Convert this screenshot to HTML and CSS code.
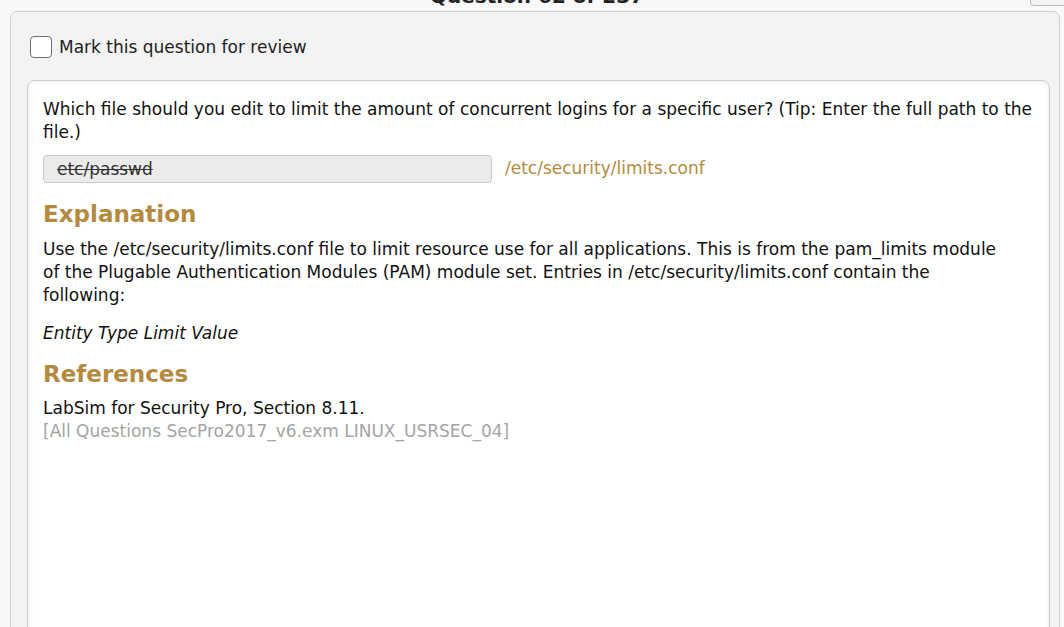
FILE: index.html
```html
<!DOCTYPE html>
<html>
<head>
<meta charset="utf-8">
<link rel="stylesheet" href="styles.css">
</head>
<body>
<div class="topbar">
  <div class="title">Question 62 of 237</div>
  <div class="topbtn"></div>
</div>
<div class="outer">
  <label class="mark"><span class="box"></span><span>Mark this question for review</span></label>
  <div class="inner">
    <p class="question">Which file should you edit to limit the amount of concurrent logins for a specific user? (Tip: Enter the full path to the file.)</p>
    <div class="answer-row">
      <div class="input"><s>etc/passwd</s></div>
      <span class="correct">/etc/security/limits.conf</span>
    </div>
    <h2>Explanation</h2>
    <p class="para">Use the /etc/security/limits.conf file to limit resource use for all applications. This is from the pam_limits module of the Plugable Authentication Modules (PAM) module set. Entries in /etc/security/limits.conf contain the following:</p>
    <p class="para italic">Entity Type Limit Value</p>
    <h2 class="refs">References</h2>
    <p class="ref">LabSim for Security Pro, Section 8.11.<br><span class="gray">[All Questions SecPro2017_v6.exm LINUX_USRSEC_04]</span></p>
  </div>
</div>
</body>
</html>
```
FILE: styles.css
```css
html, body {
  margin: 0;
  padding: 0;
  height: 100%;
  overflow: hidden;
}
body {
  background: #f8f8f8;
  font-family: "DejaVu Sans", sans-serif;
  font-size: 17px;
  color: #111;
}
.topbar {
  position: relative;
  height: 11px;
}
.title {
  position: absolute;
  left: 0;
  right: 0;
  top: -16px;
  text-align: center;
  font-weight: bold;
  font-size: 20px;
  color: #222;
  padding-left: 10px;
}
.topbtn {
  position: absolute;
  right: -10px;
  top: -10px;
  width: 42px;
  height: 14px;
  border: 1px solid #bbb;
  border-radius: 4px;
  background: #f3f3f3;
}
.outer {
  margin: 0 4px 0 10px;
  background: #f3f3f3;
  border: 1px solid #cfcfcf;
  border-radius: 7px;
  height: 700px;
  padding: 24px 9px 0 16px;
}
.mark {
  display: flex;
  align-items: center;
  gap: 7px;
  color: #222;
  margin-left: 3px;
  height: 22px;
}
.box {
  width: 20px;
  height: 20px;
  border: 1px solid #6f6f6f;
  border-radius: 4px;
  background: #fff;
}
.inner {
  margin-top: 22px;
  background: #fff;
  border: 1px solid #cdcdcd;
  border-radius: 8px;
  box-shadow: inset 0 0 6px rgba(0,0,0,0.08);
  height: 640px;
  padding: 17px 15px 0 15px;
}
p { margin: 0; }
.question {
  line-height: 23px;
}
.answer-row {
  display: flex;
  align-items: center;
  gap: 13px;
  margin-top: 11px;
}
.input {
  width: 434px;
  height: 26px;
  background: #ebebeb;
  border: 1px solid #c8c8c8;
  border-radius: 4px;
  padding-left: 13px;
  line-height: 27px;
  color: #333;
}
.input s { text-decoration-thickness: 1px; }
.correct {
  color: #b58a3c;
  margin-top: -3px;
}
h2 {
  margin: 16px 0 0;
  font-size: 23px;
  font-weight: bold;
  color: #b68a3e;
  line-height: 30px;
}
h2.refs { margin-top: 14px; }
.para {
  line-height: 23px;
  margin-top: 9px;
  max-width: 965px;
}
.italic {
  font-style: italic;
  margin-top: 15px;
}
.ref {
  line-height: 23px;
  margin-top: 8px;
}
.gray { color: #a4a4a4; }
```
